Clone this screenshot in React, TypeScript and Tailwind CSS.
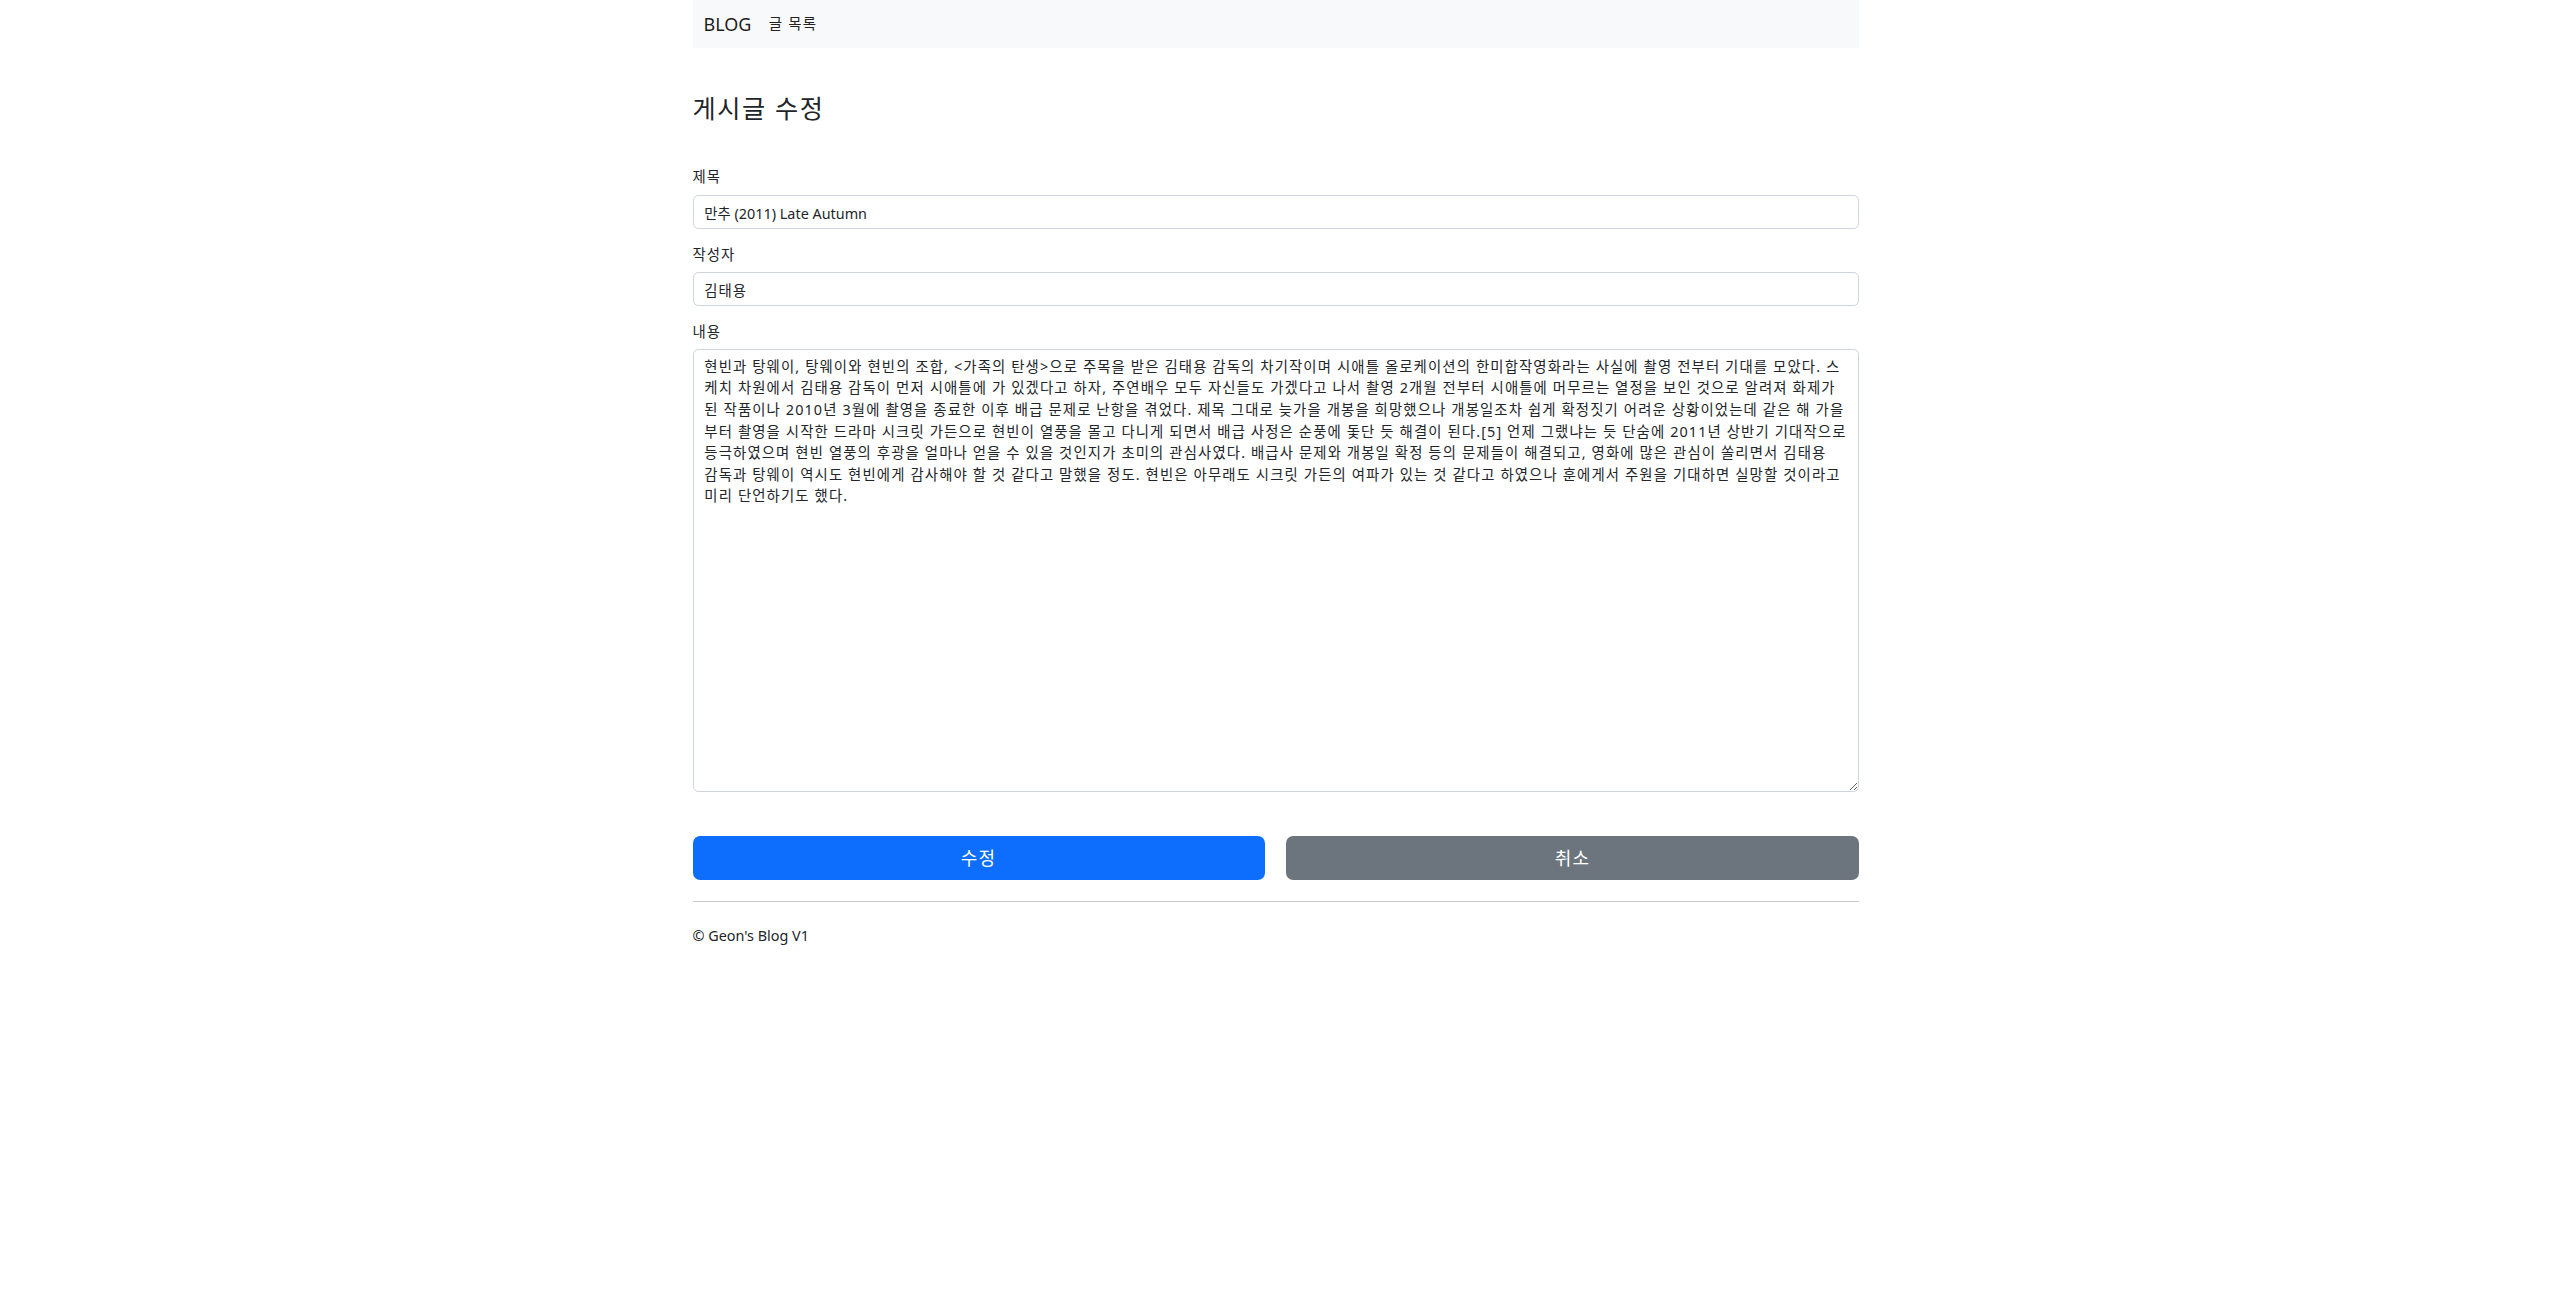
import React from "react";

const LINES = [
  "현빈과 탕웨이, 탕웨이와 현빈의 조합, <가족의 탄생>으로 주목을 받은 김태용 감독의 차기작이며 시애틀 올로케이션의 한미합작영화라는 사실에 촬영 전부터 기대를 모았다. 스",
  "케치 차원에서 김태용 감독이 먼저 시애틀에 가 있겠다고 하자, 주연배우 모두 자신들도 가겠다고 나서 촬영 2개월 전부터 시애틀에 머무르는 열정을 보인 것으로 알려져 화제가",
  "된 작품이나 2010년 3월에 촬영을 종료한 이후 배급 문제로 난항을 겪었다. 제목 그대로 늦가을 개봉을 희망했으나 개봉일조차 쉽게 확정짓기 어려운 상황이었는데 같은 해 가을",
  "부터 촬영을 시작한 드라마 시크릿 가든으로 현빈이 열풍을 몰고 다니게 되면서 배급 사정은 순풍에 돛단 듯 해결이 된다.[5] 언제 그랬냐는 듯 단숨에 2011년 상반기 기대작으로",
  "등극하였으며 현빈 열풍의 후광을 얼마나 얻을 수 있을 것인지가 초미의 관심사였다. 배급사 문제와 개봉일 확정 등의 문제들이 해결되고, 영화에 많은 관심이 쏠리면서 김태용",
  "감독과 탕웨이 역시도 현빈에게 감사해야 할 것 같다고 말했을 정도. 현빈은 아무래도 시크릿 가든의 여파가 있는 것 같다고 하였으나 훈에게서 주원을 기대하면 실망할 것이라고",
  "미리 단언하기도 했다.",
];

const CONTENT = LINES.join("\n");

export default function App() {
  return (
    <div className="min-h-screen bg-white text-[#212529] font-['Noto_Sans','Noto_Sans_CJK_KR',sans-serif]">
      <div className="mx-auto w-[1166px] -translate-x-[1px]">
        <nav className="flex h-[48px] items-center bg-[#f8f9fa] px-[11px]">
          <span className="mr-[14.4px] text-[18px] leading-[27px] text-black/90">BLOG</span>
          <span className="pl-[3px] text-[14.4px] leading-[21.6px] tracking-[1.2px] text-[#222]">글 목록</span>
        </nav>

        <h3 className="mt-[44.5px] text-[25.2px] font-normal leading-[30.24px] tracking-[1.6px]">게시글 수정</h3>

        <form className="mt-[43.6px]" onSubmit={(e) => e.preventDefault()}>
          <div className="mb-[14.4px]">
            <label className="mb-[7.2px] block text-[14.4px] leading-[21.6px] tracking-[1px]">제목</label>
            <input
              className="block h-[34px] w-full rounded-[5.4px] border border-[#ced4da] px-[10.8px] text-[14.4px] leading-[21.6px] text-[#212529] outline-none"
              defaultValue="만추 (2011) Late Autumn"
            />
          </div>
          <div className="mb-[14.4px]">
            <label className="mb-[7.2px] block text-[14.4px] leading-[21.6px] tracking-[1px]">작성자</label>
            <input
              className="block h-[34px] w-full rounded-[5.4px] border border-[#ced4da] px-[10.8px] text-[14.4px] leading-[21.6px] tracking-[1px] text-[#212529] outline-none"
              defaultValue="김태용"
            />
          </div>
          <div>
            <label className="mb-[7.2px] block text-[14.4px] leading-[21.6px] tracking-[1px]">내용</label>
            <textarea
              wrap="off"
              className="block h-[443px] w-full overflow-hidden whitespace-pre rounded-[5.4px] border border-[#ced4da] px-[10.8px] py-[5.4px] text-[14.4px] leading-[21.6px] tracking-[1.12px] text-[#212529] outline-none"
              defaultValue={CONTENT}
            />
          </div>

          <div className="mt-[44px] grid grid-cols-2 gap-x-[21.6px]">
            <button
              type="submit"
              className="h-[44px] rounded-[7.2px] bg-[#0d6efd] text-[18px] leading-[27px] tracking-[1.2px] text-white"
            >
              수정
            </button>
            <button
              type="button"
              className="h-[44px] rounded-[7.2px] bg-[#6c757d] text-[18px] leading-[27px] tracking-[1.2px] text-white"
            >
              취소
            </button>
          </div>
        </form>

        <hr className="mt-[21px] border-0 border-t border-[#c8c9ca]" />

        <footer className="mt-[23px] text-[14.4px] leading-[21.6px]">© Geon's Blog V1</footer>
      </div>
    </div>
  );
}
